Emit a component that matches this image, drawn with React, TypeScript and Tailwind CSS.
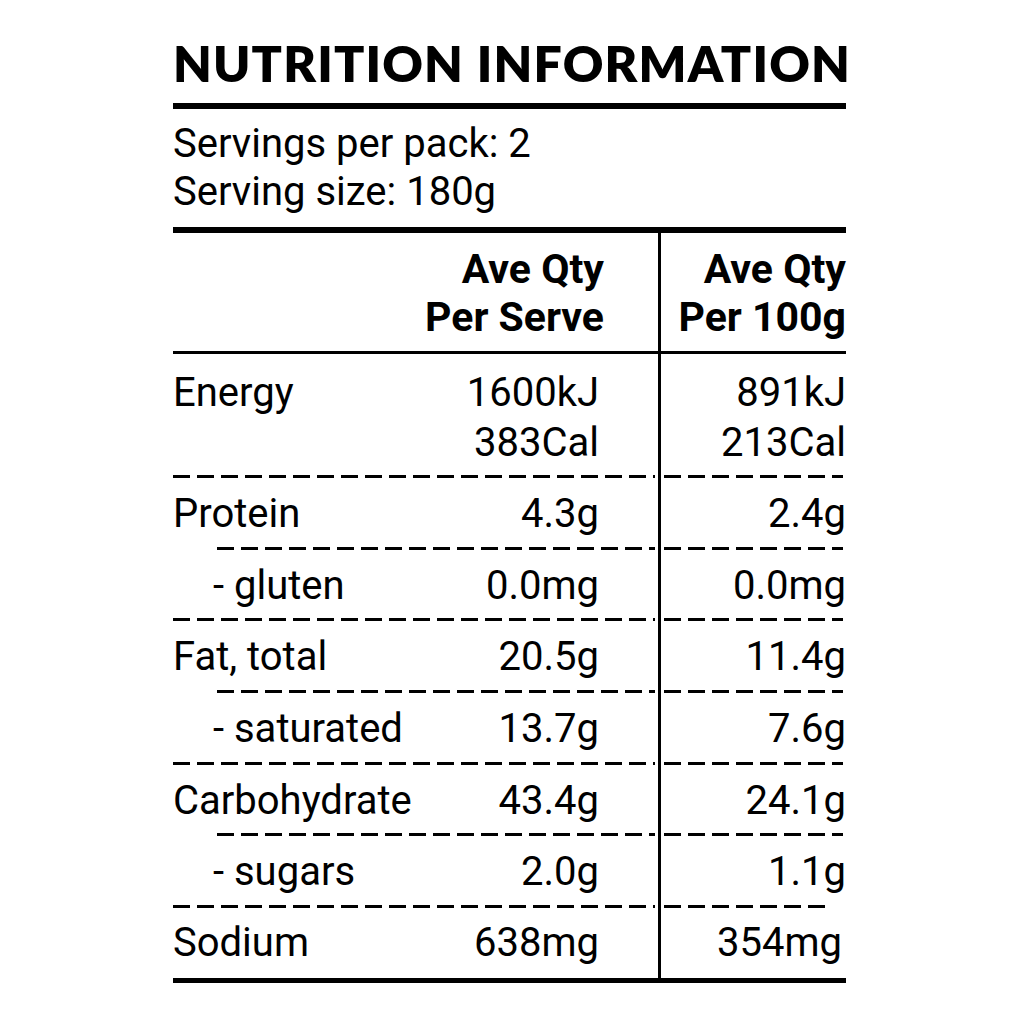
import React from "react";

type Row = {
  label: string;
  indent?: boolean;
  serve: string;
  per100: string;
  dashIndent?: boolean; // dashed line below starts indented
  dashShort?: boolean;
};

const rows: Row[] = [
  { label: "Protein", serve: "4.3g", per100: "2.4g", dashIndent: true },
  { label: "- gluten", indent: true, serve: "0.0mg", per100: "0.0mg" },
  { label: "Fat, total", serve: "20.5g", per100: "11.4g", dashIndent: true },
  { label: "- saturated", indent: true, serve: "13.7g", per100: "7.6g" },
  { label: "Carbohydrate", serve: "43.4g", per100: "24.1g", dashIndent: true },
  { label: "- sugars", indent: true, serve: "2.0g", per100: "1.1g", dashShort: true },
];

function Dashed({ indent, short }: { indent?: boolean; short?: boolean }) {
  return (
    <div className="grid grid-cols-[488px_185px]">
      <div className="border-r-[3px] border-black flex">
        <div
          className={
            indent
              ? "ml-[44px] mr-[3px] h-[3px] flex-1 bg-[repeating-linear-gradient(90deg,#000_0_17px,transparent_17px_24px)]"
              : "mr-[3px] h-[3px] flex-1 bg-[repeating-linear-gradient(90deg,#000_0_17px,transparent_17px_24px)]"
          }
        />
      </div>
      <div className="flex">
        <div
          className={
            short
              ? "ml-[3px] mr-[17px] h-[3px] flex-1 bg-[repeating-linear-gradient(90deg,#000_0_17px,transparent_17px_24px)]"
              : "ml-[3px] mr-[3px] h-[3px] flex-1 bg-[repeating-linear-gradient(90deg,#000_0_17px,transparent_17px_24px)]"
          }
        />
      </div>
    </div>
  );
}

export default function App() {
  return (
    <div className="w-[1024px] h-[1024px] bg-white text-black overflow-hidden">
      <div className="ml-[173px] w-[673px] font-['Roboto',sans-serif]">
        <h1 className="pt-[38px] text-[50px] leading-[50px] font-extrabold tracking-[1.15px] font-['Lato',sans-serif] whitespace-nowrap">
          NUTRITION INFORMATION
        </h1>
        <div className="mt-[15px] h-[6px] bg-black" />
        <div className="mt-[10.6px] text-[40px] leading-[48px]">
          <div>Servings per pack: 2</div>
          <div>Serving size: 180g</div>
        </div>
        <div className="mt-[11.7px] h-[6px] bg-black" />

        {/* header */}
        <div className="grid grid-cols-[488px_185px] text-[41px] leading-[48px] font-bold">
          <div className="border-r-[3px] border-black pt-[12px] pb-[10px] pr-[54px] text-right">
            <div>Ave Qty</div>
            <div>Per Serve</div>
          </div>
          <div className="pt-[12px] pb-[10px] text-right">
            <div>Ave Qty</div>
            <div>Per 100g</div>
          </div>
        </div>
        <div className="h-[3px] bg-black" />

        {/* energy */}
        <div className="grid grid-cols-[488px_185px] text-[40px] leading-[50px]">
          <div className="border-r-[3px] border-black pt-[14px] pb-[7px] flex justify-between">
            <div>Energy</div>
            <div className="pr-[59px] text-right">
              <div>1600kJ</div>
              <div>383Cal</div>
            </div>
          </div>
          <div className="pt-[14px] pb-[7px] text-right">
            <div>891kJ</div>
            <div>213Cal</div>
          </div>
        </div>
        <Dashed />

        {rows.map((r) => (
          <React.Fragment key={r.label}>
            <div className="grid grid-cols-[488px_185px] text-[40px] leading-[48px]">
              <div className="border-r-[3px] border-black pt-[12px] pb-[8.6px] flex justify-between whitespace-nowrap">
                <div className={r.indent ? "pl-[40px]" : ""}>{r.label}</div>
                <div className="pr-[59px] text-right">{r.serve}</div>
              </div>
              <div className="pt-[12px] pb-[8.6px] text-right">{r.per100}</div>
            </div>
            <Dashed indent={r.dashIndent} short={r.dashShort} />
          </React.Fragment>
        ))}

        {/* sodium */}
        <div className="grid grid-cols-[488px_185px] text-[40px] leading-[48px]">
          <div className="border-r-[3px] border-black pt-[11px] pb-[11.5px] flex justify-between">
            <div>Sodium</div>
            <div className="pr-[59px] text-right">638mg</div>
          </div>
          <div className="pt-[11px] pb-[11.5px] pr-[4px] text-right">354mg</div>
        </div>
        <div className="h-[5px] bg-black" />
      </div>
    </div>
  );
}
